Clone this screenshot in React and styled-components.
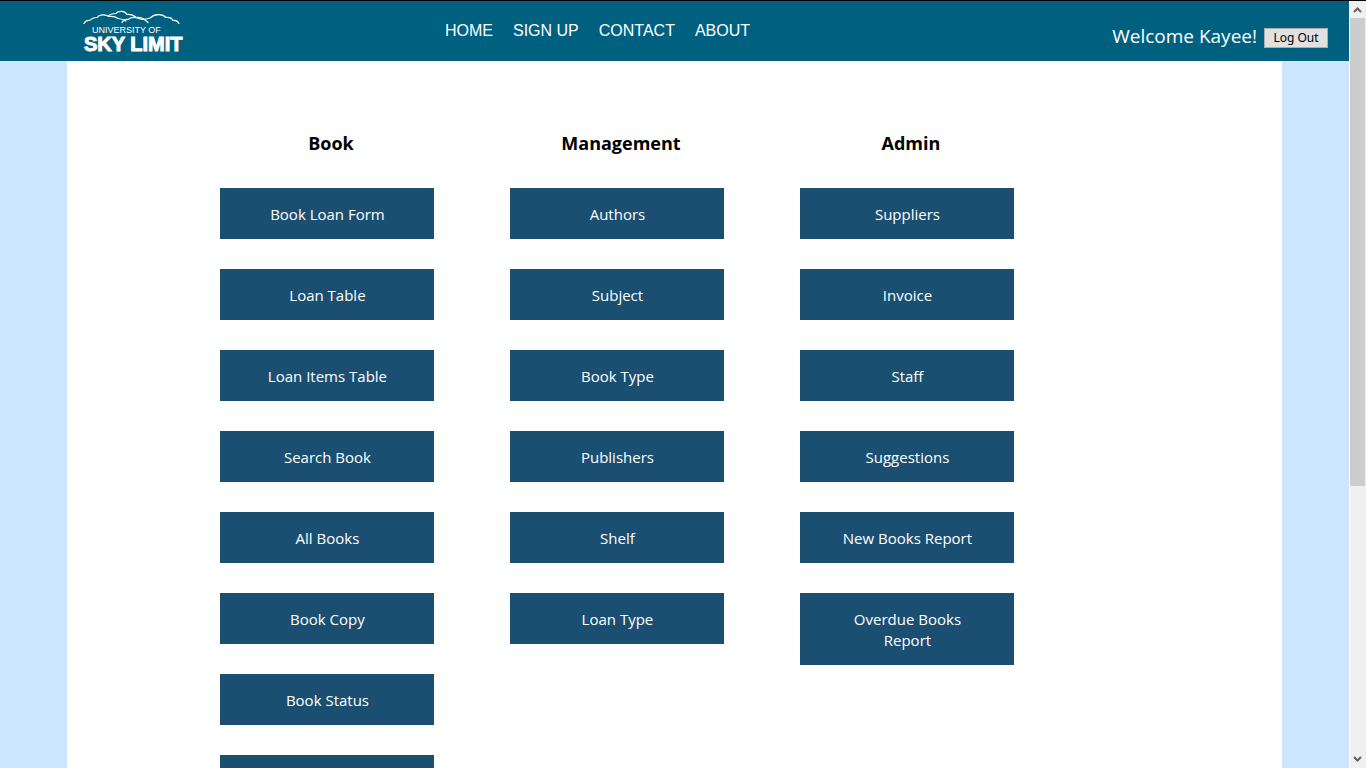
import React from "react";
import styled, { createGlobalStyle, css } from "styled-components";

const GlobalStyle = createGlobalStyle`
  *, *::before, *::after { box-sizing: border-box; }
  body {
    margin: 0;
    font-family: "Open Sans", "Noto Sans", sans-serif;
    overflow: hidden;
  }
`;

const Window = styled.div`
  display: flex;
  height: 100vh;
  border-top: 1px solid #000;
  overflow: hidden;
`;

const Page = styled.div`
  flex: 1;
  min-width: 0;
  display: flex;
  flex-direction: column;
  background: #cce6ff;
  border-right: 1px solid #fff;
  overflow: hidden;
`;

const Header = styled.header`
  flex: none;
  display: grid;
  grid-template-columns: 445px auto 1fr;
  height: 60px;
  padding-right: 21px;
  background: #006080;
  color: #fff;
`;

const Brand = styled.a`
  justify-self: start;
  padding: 8px 0 0 80px;
  line-height: 0;
`;

const Nav = styled.nav`
  display: flex;
  gap: 20px;
  padding-top: 20px;
  font: 16px/20px "Liberation Sans", sans-serif;
`;

const NavLink = styled.a`
  color: #fff;
  text-decoration: none;
`;

const Session = styled.div`
  display: flex;
  justify-content: flex-end;
  align-items: center;
  gap: 7px;
  padding-top: 10px;
`;

const Welcome = styled.span`
  font-size: 19px;
  line-height: 26px;
`;

const LogOut = styled.button`
  width: 64px;
  height: 20px;
  margin-top: 4px;
  padding: 0;
  border: 1px solid #adadad;
  background: #e1e1e1;
  color: #000;
  font: 12px/16px "Noto Sans", sans-serif;
`;

const Content = styled.main`
  flex: 1;
  min-height: 0;
  display: flex;
  align-items: flex-start;
  gap: 69px;
  width: 90%;
  margin: 0 auto;
  padding: 70px 0 0 153px;
  background: #fff;
  overflow: hidden;
`;

const Column = styled.section`
  flex: none;
  width: 221px;
`;

const Heading = styled.h2`
  margin: 0 0 32px;
  font-size: 18px;
  line-height: 25px;
  font-weight: 700;
  text-align: center;
  color: #000;
`;

const Menu = styled.div`
  display: flex;
  flex-direction: column;
  gap: 30px;
`;

const MenuLink = styled.a`
  width: 214px;
  min-height: 51px;
  padding: 16px 40px 14px;
  background: #1b4f72;
  color: #fff;
  font-size: 15px;
  line-height: 21px;
  text-align: center;
  text-decoration: none;
`;

const ScrollTrack = styled.div`
  flex: none;
  display: flex;
  flex-direction: column;
  justify-content: space-between;
  width: 16px;
  background: #f0f0f0;
`;

const ScrollArrow = styled.svg`
  display: block;
  width: 15px;
  height: 17px;
  flex: none;
  ${(p) => p.$down && css`transform: rotate(180deg);`}
`;

const ScrollThumb = styled.div`
  width: 15px;
  height: 61%;
  margin-bottom: auto;
  background: #cdcdcd;
`;

const columns = [
  {
    title: "Book",
    items: ["Book Loan Form", "Loan Table", "Loan Items Table", "Search Book", "All Books", "Book Copy", "Book Status", ""],
  },
  {
    title: "Management",
    items: ["Authors", "Subject", "Book Type", "Publishers", "Shelf", "Loan Type"],
  },
  {
    title: "Admin",
    items: ["Suppliers", "Invoice", "Staff", "Suggestions", "New Books Report", "Overdue Books Report"],
  },
];

function Logo() {
  return (
    <svg width="106" height="46" viewBox="0 0 106 46" fill="none" stroke="#fff">
      <g strokeWidth="1.2" strokeLinecap="round" strokeLinejoin="round">
        <path d="M4 14.500C5 12 7 11 10 11.500C12 9 15 8.500 17 8.500C19 5.500 25 5 29 7.500C33 7 36 8 38 9.500C41 9.500 44 11 46 12" />
        <path d="M29 6.500C31 4.500 33 4.500 36 4.500C38 1.500 45 1.500 47 5.500C52 5 54 6.500 56 8.500C60 8 65 10.500 68 13.500" />
        <path d="M42 13.500C43 11.500 45 10 48 10.500C51 8 56 7.500 60 10C64 11 67 10 70 9C74 5 82 4 86 8.500C90 8 92 9.500 93 11.500C96 11 98 12.500 99 14.500" />
      </g>
      <text x="12" y="24" fill="#fff" stroke="none" fontFamily="Liberation Sans, sans-serif" fontSize="9">
        UNIVERSITY OF
      </text>
      <text x="4" y="42" fill="#fff" strokeWidth="1" fontFamily="Liberation Sans, sans-serif" fontWeight="700" fontSize="20">
        SKY LIMIT
      </text>
    </svg>
  );
}

export default function App() {
  return (
    <>
      <GlobalStyle />
      <Window>
        <Page>
          <Header>
            <Brand href="#home">
              <Logo />
            </Brand>
            <Nav>
              {["HOME", "SIGN UP", "CONTACT", "ABOUT"].map((label) => (
                <NavLink key={label} href="#">{label}</NavLink>
              ))}
            </Nav>
            <Session>
              <Welcome>Welcome Kayee!</Welcome>
              <LogOut type="button">Log Out</LogOut>
            </Session>
          </Header>
          <Content>
            {columns.map(({ title, items }) => (
              <Column key={title}>
                <Heading>{title}</Heading>
                <Menu>
                  {items.map((item) => (
                    <MenuLink key={item} href="#">{item}</MenuLink>
                  ))}
                </Menu>
              </Column>
            ))}
          </Content>
        </Page>
        <ScrollTrack aria-hidden="true">
          <ScrollArrow viewBox="0 0 15 17">
            <path d="M4 11L7.500 7.500L11 11" fill="none" stroke="#606060" strokeWidth="2" />
          </ScrollArrow>
          <ScrollThumb />
          <ScrollArrow $down viewBox="0 0 15 17">
            <path d="M4 11L7.500 7.500L11 11" fill="none" stroke="#606060" strokeWidth="2" />
          </ScrollArrow>
        </ScrollTrack>
      </Window>
    </>
  );
}
